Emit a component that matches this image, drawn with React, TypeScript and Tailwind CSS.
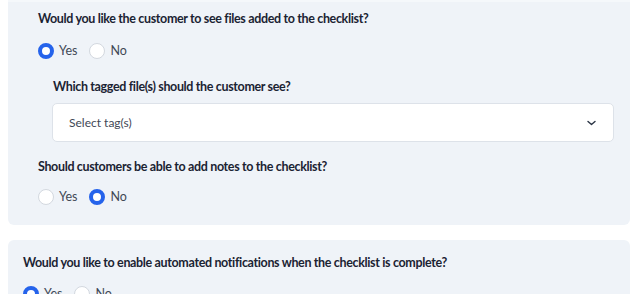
import React from "react";

function Radio({ checked, label }: { checked: boolean; label: string }) {
  return (
    <label className="flex items-center gap-[5px]">
      {checked ? (
        <span className="w-[16px] h-[16px] rounded-full border-[4.5px] border-[#2563eb] bg-white box-border" />
      ) : (
        <span className="w-[16px] h-[16px] rounded-full border border-[#d3d8df] bg-white box-border" />
      )}
      <span className="text-[12.5px] leading-[16px] text-[#3f4856]">{label}</span>
    </label>
  );
}

function RadioRow({ yes }: { yes: boolean }) {
  return (
    <div className="flex items-center gap-[12px]">
      <Radio checked={yes} label="Yes" />
      <Radio checked={!yes} label="No" />
    </div>
  );
}

const heading = "text-[12.5px] leading-[20px] font-bold tracking-[-0.35px] text-[#1b2333]";

export default function App() {
  return (
    <div
      className="w-[638px] h-[294px] overflow-hidden bg-white px-[8px]"
      style={{ fontFamily: "Lato, 'Noto Sans', sans-serif" }}
    >
      <div className="w-[622px] bg-[#eff3f8] border-t-2 border-[#f5f8fb] rounded-b-[6px] pt-[7px] pb-[20px] pl-[30px] pr-[16px]">
        <h2 className={heading}>
          Would you like the customer to see files added to the checklist?
        </h2>
        <div className="mt-[14px]">
          <RadioRow yes={true} />
        </div>
        <div className="mt-[18px] pl-[15px]">
          <h3 className={heading}>
            Which tagged file(s) should the customer see?
          </h3>
          <div className="mt-[6px] -ml-[1px] h-[39px] bg-white border border-[#dde2e9] rounded-[5px] flex items-center justify-between pl-[16px] pr-[17px]">
            <span className="text-[12px] text-[#3f4856]">Select tag(s)</span>
            <svg width="9" height="6" viewBox="0 0 9 6" fill="none">
              <path d="M1 1.5l3.5 3 3.5-3" stroke="#2a3444" strokeWidth="1.4" strokeLinecap="round" strokeLinejoin="round" />
            </svg>
          </div>
        </div>
        <h2 className={"mt-[15px] " + heading}>
          Should customers be able to add notes to the checklist?
        </h2>
        <div className="mt-[12px]">
          <RadioRow yes={false} />
        </div>
      </div>
      <div className="mt-[15px] w-[622px] bg-[#eff3f8] rounded-[6px] pt-[13px] pb-[20px] pl-[15px] pr-[16px]">
        <h2 className={heading}>
          Would you like to enable automated notifications when the checklist is complete?
        </h2>
        <div className="mt-[13px]">
          <RadioRow yes={true} />
        </div>
      </div>
    </div>
  );
}
